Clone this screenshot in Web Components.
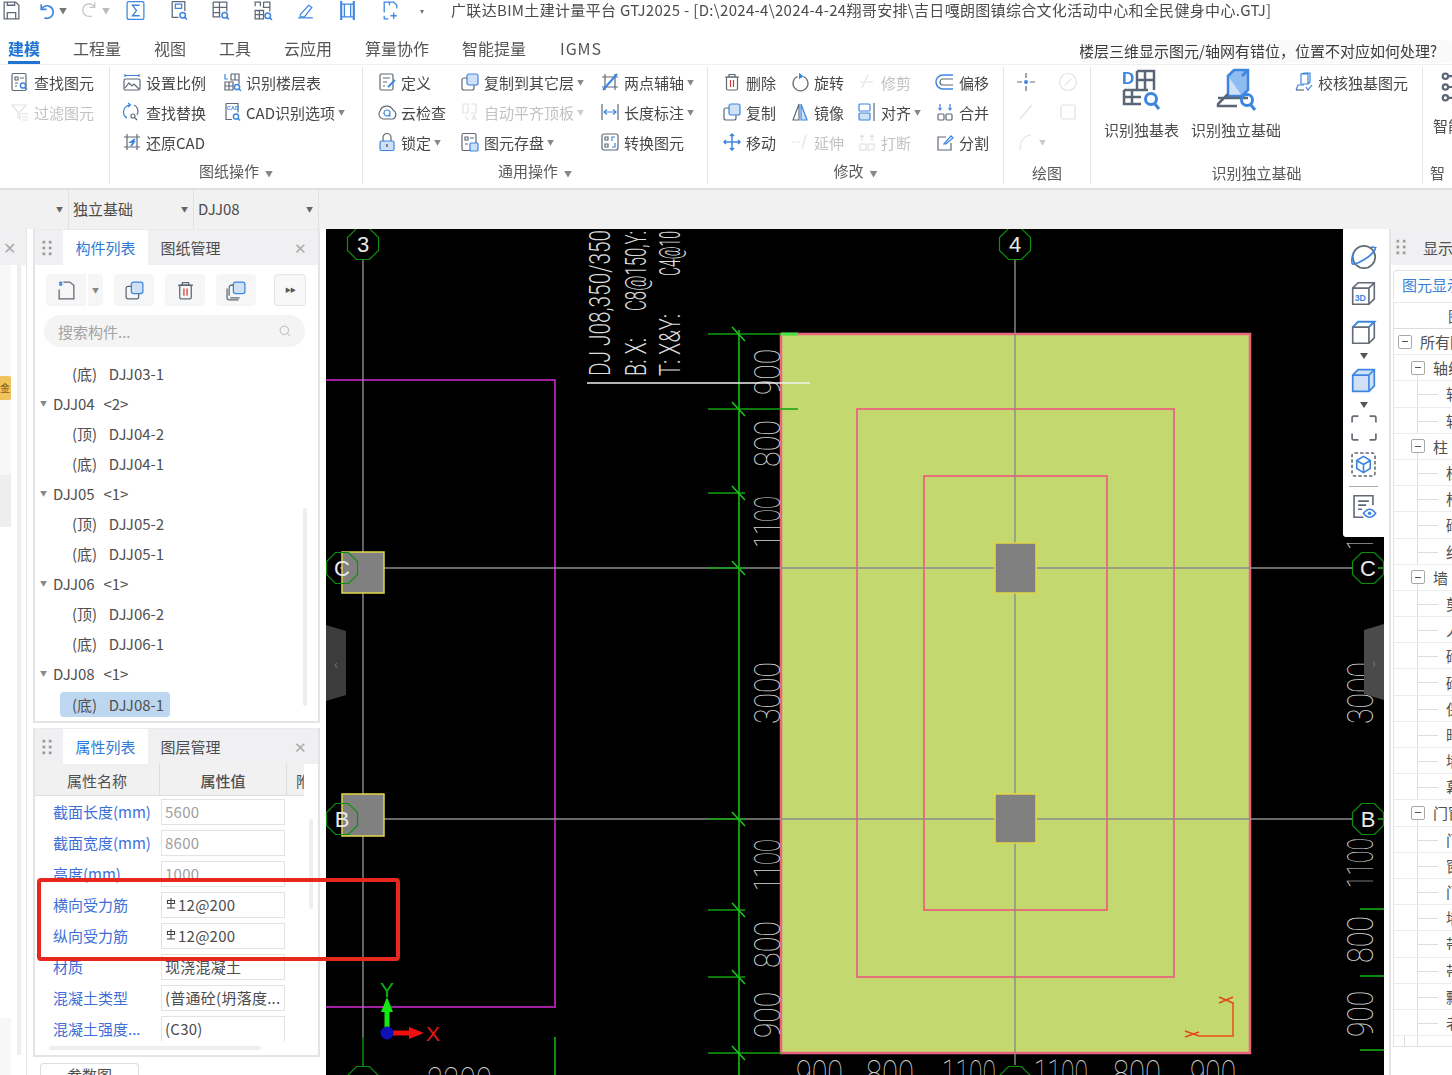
<!doctype html>
<html lang="zh">
<head>
<meta charset="utf-8">
<title>GTJ2025</title>
<style>
  html, body { margin: 0; height: 100%; overflow: hidden; background: #fff; }
  body { font: 15px "Noto Sans CJK SC", "Liberation Sans", sans-serif; color: #4a4a4a; }
</style>
</head>
<body>
<gtj-app>
  <gtj-titlebar></gtj-titlebar>
  <gtj-tabs></gtj-tabs>
  <gtj-ribbon></gtj-ribbon>
  <gtj-combos></gtj-combos>
  <gtj-main>
    <side-strip></side-strip>
    <left-col>
      <gtj-panel tabs="构件列表,图纸管理" h="494">
        <panel-tools></panel-tools>
        <comp-tree></comp-tree>
      </gtj-panel>
      <gtj-panel tabs="属性列表,图层管理" h="329" style="margin-top:5px">
        <prop-table></prop-table>
      </gtj-panel>
      <bottom-tab>参数图</bottom-tab>
    </left-col>
    <cad-canvas></cad-canvas>
    <display-panel></display-panel>
    <red-note></red-note>
  </gtj-main>
</gtj-app>

<script>
const B = "#3d86e0", L = "#cfe0f7", R = "#d8393a";
const Q = (x, y) => `<circle cx="${x}" cy="${y}" r="2.6" stroke="${B}" stroke-width="1.5"/><path d="M${x + 2} ${y + 2}l2 2" stroke="${B}" stroke-width="1.5"/>`;
const COPY = `<rect x="7" y="2" width="11" height="11" rx="2" fill="${L}" stroke="${B}"/><path d="M7 6H4a2 2 0 0 0-2 2v8a2 2 0 0 0 2 2h8a2 2 0 0 0 2-2v-3"/>`;
const TRASH = `<path d="M3 5h14M7 5V2.5h6V5"/><rect x="4.5" y="5" width="11" height="13" rx="1.5"/><path d="M8.5 8v7M11.5 8v7" stroke="${R}"/>`;

const ICONS = {
  save: `<path d="M3 2h11l3 3v13H3zM6 18v-6h8v6M6 2v3h7V2"/>`,
  undo: `<path d="M5 4v5h5M5 9a6 6 0 1 1 3 8" stroke="${B}" stroke-width="1.6"/>`,
  redo: `<path d="M15 4v5h-5M15 9a6 6 0 1 0-3 8"/>`,
  sigma: `<rect x="2" y="1.5" width="16" height="17" rx="1.5" stroke="${B}"/><path d="M14 5H7l4 5-4 5h7" stroke="${B}"/>`,
  qa: `<path d="M4 1.5v15h6M4 1.5h12v9"/><path d="M7 4h6v4H7z" stroke="${B}"/>${Q(14, 14.5)}`,
  qb: `<path d="M3 2h13v9M3 2v14h7M3 7h13M3 12h7M9 2v14"/>${Q(14, 14.5)}`,
  qc: `<path d="M3 6V2h5v4M11 2h6v9M11 2v5h6M3 10h8v8H3zM3 14h8M7 10v8" />${Q(15, 15)}`,
  qd: `<path d="M3 17h14" stroke="${B}"/><path d="M5 14l8-9 3 2-7 9H5z" stroke="${B}"/>`,
  qe: `<path d="M4 1v18M16 1v18" stroke="${B}" stroke-width="2"/><path d="M4 4h12M4 16h12M7 4v12M13 4v12" stroke="${B}"/>`,
  qf: `<path d="M4 12V2h9l3 3v3M4 15v3h4M9 2v3" stroke="${B}"/><path d="M13 12v6M10 15h6" stroke="${B}"/>`,
  find: `<rect x="2" y="1.5" width="14" height="17" rx="1.5"/><path d="M5 5h3v3H5zM10 6h4M5 11h3M5 14h2"/>${Q(13, 13.5)}`,
  filter: `<path d="M2 3h14l-6 7v7l-2-2v-5z"/><path d="M12 12h6M12 15h6M12 18h6"/>`,
  scale: `<path d="M3 2v3M17 2v3M3 3.5h14" stroke="${B}"/><rect x="2" y="7" width="16" height="11" rx="1.5"/><path d="M3 16l4-5 3 3 2-2 5 5"/>`,
  replace: `<path d="M8 3a7 7 0 0 0-3 13M6 1l2.500 2L6 5" stroke="${B}"/><path d="M12 3a7 7 0 0 1 3 10"/><circle cx="11" cy="14" r="2"/><path d="M13 16l2 2"/>`,
  restore: `<path d="M2 5h16M2 15h16M5 2v16M15 2v16"/><path d="M13 7l-4 3h3l-3 4" stroke="${B}" stroke-width="1.8"/>`,
  floor: `<path d="M3 2v5h3" stroke="${B}"/><path d="M9 2h8v10M9 2v6h8M13 2v6M3 10h8v8H3zM3 14h8M7 10v8"/>${Q(15, 15)}`,
  cadopt: `<path d="M4 1.500h12v9M4 1.500v16h6"/><text x="5" y="8" font-size="5.500" font-weight="700" fill="${B}" stroke="none">CAD</text>${Q(14, 14.5)}`,
  define: `<rect x="3" y="2" width="13" height="16" rx="1.500"/><path d="M6 6h7M6 10h4M6 14h2"/><path d="M11 15l7-7" stroke="${B}" stroke-width="1.800"/>`,
  cloud: `<path d="M6 17a5 5 0 0 1-3-8 7 7 0 0 1 13-1 5 5 0 0 1 0 9z"/><circle cx="10" cy="11" r="3" stroke="${B}"/><path d="M12 13l1.500 1.500" stroke="${B}"/>`,
  lock: `<rect x="3" y="9" width="14" height="9.500" rx="1.500" fill="${L}" stroke="${B}"/><path d="M6 9V5.500a4 4 0 0 1 8 0V9"/><path d="M10 12v3" stroke="#445"/>`,
  copy: COPY,
  autoflat: `<path d="M3 2h5v9H3zM11 2h5v9h-5M5 14l3 4M12 18l2-5 2 5M13 16.500h2"/>`,
  disk: `<rect x="2" y="1.500" width="14" height="17" rx="1.500"/><path d="M5 5h3v3H5zM10 6h4M5 12h3"/><rect x="10" y="11" width="8" height="8" rx="1" fill="${L}" stroke="${B}"/>`,
  axis: `<path d="M2 5h16M2 15h16M5 2v16M15 2v16"/><path d="M3 18L17 2" stroke="${B}" stroke-width="2"/>`,
  dim: `<path d="M2 2v16M18 2v16"/><path d="M4 10h12M7 7.500L4 10l3 2.500M13 7.500l3 2.500-3 2.500" stroke="${B}"/>`,
  convert: `<rect x="2" y="2" width="16" height="16" rx="2"/><path d="M5 5h3v3H5zM5 12h3v3H5z"/><path d="M12 9V5h3M15 11v4h-3" stroke="${B}"/>`,
  del: TRASH,
  rotate: `<path d="M13.500 4.500a7.500 7.500 0 1 1-6 0"/><path d="M9 1.500l3.500 3-3.500 2" stroke="${B}" fill="${B}"/>`,
  trim: `<path d="M3 10h4M9.500 10H16M5 16L11 3"/>`,
  offset: `<path d="M18 3H8a7 7 0 0 0 0 14h10" stroke="${B}" stroke-width="1.500"/><path d="M18 7H8a3 3 0 0 0 0 6h10"/>`,
  mirror: `<path d="M9 2L3 18h6z"/><path d="M11 2l6 16h-6z" fill="${L}" stroke="${B}"/>`,
  align: `<rect x="2" y="2" width="11" height="7" rx="1" stroke="${B}"/><rect x="2" y="11" width="11" height="7" rx="1" fill="${L}" stroke="${B}"/><path d="M17 1v18"/>`,
  merge: `<rect x="3" y="12" width="6" height="6" rx="1"/><rect x="11" y="12" width="6" height="6" rx="1"/><path d="M5 2v6M15 2v6" stroke="${B}"/><path d="M3.500 6L5 8l1.500-2M13.500 6L15 8l1.500-2" stroke="${B}"/>`,
  move: `<path d="M10 2v16M2 10h16M8 4l2-2 2 2M8 16l2 2 2-2M4 8l-2 2 2 2M16 8l2 2-2 2" stroke="${B}" stroke-width="1.500"/>`,
  extend: `<path d="M2 10h9" stroke-dasharray="3 2"/><path d="M12 17L16 3"/>`,
  brk: `<rect x="3" y="12" width="6" height="6"/><rect x="11" y="12" width="6" height="6"/><path d="M5 3v6M15 3v6M3 5l2-2 2 2M13 5l2-2 2 2"/>`,
  split: `<path d="M11 5H3v13h13v-7"/><path d="M9 12l7-8 2 2-7 6z" stroke="${B}"/>`,
  point: `<path d="M10 1v5M10 14v5M1 10h5M14 10h5"/><circle cx="10" cy="10" r="2" fill="${B}" stroke="none"/>`,
  gauge: `<circle cx="10" cy="10" r="8.500"/><path d="M7 13l6-6"/>`,
  line: `<path d="M4 17L16 3"/>`,
  rrect: `<rect x="3" y="3" width="14" height="14" rx="2"/>`,
  arc: `<path d="M4 18C4 9 8 4 15 3"/>`,
  check: `<path d="M7 2h7v10H7zM7 2l3-1h6v9l-2 2" stroke="${B}"/><path d="M2 18l2-5h6M12 15l2 3 4-5" stroke="${B}"/><path d="M2 18h8"/>`,
  smart: `<circle cx="3" cy="4" r="1.500"/><circle cx="3" cy="10" r="1.500"/><circle cx="3" cy="16" r="1.500"/><path d="M5 4h13M5 10h13M5 16h13"/>`,
  grip: `<g fill="currentColor" stroke="none"><rect x="5" y="2" width="3" height="3"/><rect x="12" y="2" width="3" height="3"/><rect x="5" y="8.500" width="3" height="3"/><rect x="12" y="8.500" width="3" height="3"/><rect x="5" y="15" width="3" height="3"/><rect x="12" y="15" width="3" height="3"/></g>`,
  newdoc: `<path d="M3 9v9h14V5l-4-3H7"/><path d="M3 2l3 3M6 2L3 5M4.500 1.500v4" stroke="${B}"/>`,
  copies: `<rect x="7" y="2" width="11" height="11" rx="2" fill="${L}" stroke="${B}"/><path d="M7 5H5a2 2 0 0 0-2 2v8M4 17h9M1 8v9a2 2 0 0 0 2 2h9"/>`,
  search: `<circle cx="9" cy="9" r="6"/><path d="M13.500 13.500L17 17"/>`,
  orbit: `<circle cx="10" cy="10" r="8"/><path d="M1.500 14C1 16 5 15 10 12s8.500-7 8-8.500" stroke="${B}" stroke-width="1.300"/><path d="M2.500 7c-1 2.500-1.500 5-1 7M15 3c2 0 3.500 0 3.500 .5" stroke="${B}"/>`,
  cube3d: `<path d="M2 6h12v12H2zM2 6l4-4h12v12l-4 4M14 6l4-4"/><text x="3.500" y="15.500" font-size="6.500" font-weight="700" fill="${B}" stroke="none">3D</text>`,
  cube: `<path d="M2 6h12v12H2zM14 18l4-4V2"/><path d="M2 6l4-4h12l-4 4" stroke="${B}" stroke-width="1.500"/>`,
  cubef: `<path d="M2 6l4-4h12v12l-4 4H2z" fill="${L}" stroke="${B}" stroke-width="1.300"/><path d="M2 6h12v12M14 6l4-4" stroke="${B}"/>`,
  frame: `<path d="M1.500 6V2.500a1 1 0 0 1 1-1H6M14 1.500h3.500a1 1 0 0 1 1 1V6M18.500 14v3.500a1 1 0 0 1-1 1H14M6 18.500H2.500a1 1 0 0 1-1-1V14"/>`,
  dashed: `<rect x="1.500" y="1.500" width="17" height="17" rx="2" stroke-dasharray="2.500 1.500"/><path d="M10 4l5 3v6l-5 3-5-3V7zM5 7l5 3 5-3M10 10v6" stroke="${B}"/>`,
  listeye: `<path d="M17 9V2H3v16h7"/><path d="M6 6h8M6 9h6M6 12h3"/><path d="M10 15c3-4 6-4 9 0-3 4-6 4-9 0z" stroke="${B}"/><circle cx="14.500" cy="15" r="1.300" fill="${B}" stroke="none"/>`,
};

class GtjIcon extends HTMLElement {
  connectedCallback() {
    const s = this.getAttribute("size") || 20;
    this.attachShadow({ mode: "open" }).innerHTML = `
      <style>
        :host { display: inline-flex; width: ${s}px; height: ${s}px; flex: none; color: var(--ic, #5f6975); }
        svg { width: 100%; height: 100%; font-family: "Liberation Sans", sans-serif; }
      </style>
      <svg viewBox="0 0 20 20" fill="none" stroke="currentColor" stroke-width="1.200">${ICONS[this.getAttribute("name")] || ""}</svg>`;
  }
}

class GtjApp extends HTMLElement {
  constructor() {
    super();
    this.attachShadow({ mode: "open" }).innerHTML = `
      <style>
        :host { display: flex; flex-direction: column; width: 1452px; height: 1075px; overflow: hidden; filter: blur(.35px); }
      </style>
      <slot></slot>`;
  }
}

class GtjTitlebar extends HTMLElement {
  constructor() {
    super();
    const q = (n, m) => `<gtj-icon name="${n}" size="21" style="margin-left:${m}px"></gtj-icon>`;
    this.attachShadow({ mode: "open" }).innerHTML = `
      <style>
        :host { display: flex; align-items: flex-start; height: 38px; padding: 0 0 0 1px; box-sizing: border-box; font-size: 15px; color: #4c4c4c; white-space: nowrap; }
        .row { display: flex; align-items: center; height: 21px; }
        .car { font-size: 8px; color: #777; margin-left: 2px; }
        .car.off { color: #bbb; }
        .off-ic { --ic: #c4c4c4; }
        .title { margin-left: 27px; line-height: 21px; margin-top: -1px; letter-spacing: .32px; }
      </style>
      <div class="row">
        ${q("save", 0)}
        ${q("undo", 14)}<span class="car">▼</span>
        <span class="off-ic">${q("redo", 12)}</span><span class="car off">▼</span>
        ${q("sigma", 15)}${q("qa", 22)}${q("qb", 21)}${q("qc", 21)}${q("qd", 22)}${q("qe", 21)}${q("qf", 22)}
        <span class="car" style="margin-left:19px">▾</span>
      </div>
      <div class="title">广联达BIM土建计量平台 GTJ2025 - [D:\\2024-4\\2024-4-24翔哥安排\\吉日嘎朗图镇综合文化活动中心和全民健身中心.GTJ]</div>`;
  }
}

class GtjTabs extends HTMLElement {
  constructor() {
    super();
    const tabs = ["建模", "工程量", "视图", "工具", "云应用", "算量协作", "智能提量", "IGMS"];
    this.attachShadow({ mode: "open" }).innerHTML = `
      <style>
        :host { display: flex; align-items: flex-start; height: 27px; padding-left: 8px; font-size: 16px; color: #555; white-space: nowrap; border-bottom: 1px solid #f0f0f0; box-sizing: border-box; }
        span { margin: -1px 33px 0 0; line-height: 22px; }
        span:nth-child(9) { letter-spacing: .9px; margin-left: 1px; }
        .on { color: #1f73d2; font-weight: 700; box-shadow: 0 -3px 0 0 #1f73d2 inset; height: 27px; }
        .ask { margin: 2px 0 0 auto; width: 372px; flex: none; height: 23px; background: #fafafa; border-radius: 3px; display: flex; justify-content: flex-end; padding-right: 15px; box-sizing: border-box; font-size: 15px; color: #3c3c3c; overflow: hidden; line-height: 22px; }
      </style>
      ${tabs.map((t, i) => `<span class="${i ? "" : "on"}">${t}</span>`).join("")}
      <div class="ask">楼层三维显示图元/轴网有错位，位置不对应如何处理?</div>`;
  }
}

class RbItem extends HTMLElement {
  constructor() {
    super();
    const off = this.hasAttribute("off");
    const car = this.hasAttribute("car");
    this.attachShadow({ mode: "open" }).innerHTML = `
      <style>
        :host { display: flex; align-items: center; height: 30px; gap: 4px; white-space: nowrap; font-size: 15px; color: ${off ? "#c2c2c2" : "#474747"}; --ic: ${off ? "#cfcfcf" : "#5f6975"}; }
        .car { font-size: 7px; color: ${off ? "#ccc" : "#888"}; margin-left: -1px; }
        gtj-icon { ${off ? "filter: grayscale(1) opacity(.6);" : ""} }
      </style>
      <gtj-icon name="${this.getAttribute("icon")}"></gtj-icon><slot></slot>${car ? `<span class="car">▼</span>` : ""}`;
  }
}

class RbBig extends HTMLElement {
  constructor() {
    super();
    this.attachShadow({ mode: "open" }).innerHTML = `
      <style>
        :host { display: flex; flex-direction: column; align-items: center; justify-self: start; white-space: nowrap; font-size: 15px; color: #4c4c4c; --ic: #5a6676; }
        svg { width: 44px; height: 44px; margin-top: 1px; font-family: "Liberation Sans", sans-serif; }
        .t { margin-top: 7px; line-height: 22px; }
      </style>
      <svg viewBox="0 0 44 44" fill="none" stroke="#5a6676" stroke-width="2.500">${this.getAttribute("kind") === "a"
        ? `<text x="2" y="16" font-size="17" font-weight="700" fill="${B}" stroke="none">D</text>
           <path d="M17 3h17v19M17 3v19M17 12h17M25 3v19M4 22h24M4 22v14h17M4 29h17M12 22v14"/>
           <circle cx="31" cy="31" r="5.500" stroke="${B}" stroke-width="3"/><path d="M35 36l4 5" stroke="${B}" stroke-width="3"/>`
        : `<path d="M14 8h14v20H14z" fill="${L}" stroke="${B}"/><path d="M14 8l6-6h14v20l-6 6M28 8l6-6" stroke="${B}" fill="#8fbcf0"/>
           <path d="M14 26L4 36v2h19M4 30h30" stroke-width="2.500"/>
           <circle cx="33" cy="32" r="5.500" stroke="${B}" stroke-width="3"/><path d="M37 37l4 5" stroke="${B}" stroke-width="3"/>`}</svg>
      <div class="t"><slot></slot></div>`;
  }
}

class RbGroup extends HTMLElement {
  connectedCallback() {
    if (this.shadowRoot) return;
    const a = n => this.getAttribute(n);
    this.attachShadow({ mode: "open" }).innerHTML = `
      <style>
        :host { display: flex; flex-direction: column; width: ${a("w")}px; flex: none; box-sizing: border-box; margin-top: 2px; height: 117px; border-right: 1px solid #e6e6e6; }
        :host(:last-child) { border-right: 0; }
        .body { flex: 1; display: grid; grid-template-columns: ${a("cols")}; grid-auto-rows: 30px; padding-left: ${a("pad")}px; overflow: hidden; }
        .lab { height: 24px; line-height: ${this.hasAttribute("low") ? 26 : 22}px; text-align: center; font-size: 15px; color: #5a5a5a; white-space: nowrap; }
        .car { font-size: 8px; color: #888; margin-left: 6px; }
      </style>
      <div class="body"><slot></slot></div>
      <div class="lab">${a("label")}${this.hasAttribute("car") ? `<span class="car">▼</span>` : ""}</div>`;
  }
}

class GtjRibbon extends HTMLElement {
  constructor() {
    super();
    const it = (icon, txt, attr = "") => `<rb-item icon="${icon}" ${attr}>${txt}</rb-item>`;
    this.attachShadow({ mode: "open" }).innerHTML = `
      <style>
        :host { display: flex; height: 125px; box-sizing: border-box; border-bottom: 2px solid #e0e0e0; overflow: hidden; }
        rb-big { grid-row: 1 / span 3; }
      </style>
      <rb-group label="" w="110" pad="10" cols="100px">
        ${it("find", "查找图元")}${it("filter", "过滤图元", "off")}
      </rb-group>
      <rb-group label="图纸操作" car w="253" pad="12" cols="100px 140px">
        ${it("scale", "设置比例")}${it("floor", "识别楼层表")}
        ${it("replace", "查找替换")}${it("cadopt", "CAD识别选项", "car")}
        ${it("restore", "还原CAD")}
      </rb-group>
      <rb-group label="通用操作" car w="345" pad="14" cols="83px 140px 100px">
        ${it("define", "定义")}${it("copy", "复制到其它层", "car")}${it("axis", "两点辅轴", "car")}
        ${it("cloud", "云检查")}${it("autoflat", "自动平齐顶板", "off car")}${it("dim", "长度标注", "car")}
        ${it("lock", "锁定", "car")}${it("disk", "图元存盘", "car")}${it("convert", "转换图元")}
      </rb-group>
      <rb-group label="修改" car w="296" pad="14" cols="68px 67px 78px 70px">
        ${it("del", "删除")}${it("rotate", "旋转")}${it("trim", "修剪", "off")}${it("offset", "偏移")}
        ${it("copy", "复制")}${it("mirror", "镜像")}${it("align", "对齐", "car")}${it("merge", "合并")}
        ${it("move", "移动")}${it("extend", "延伸", "off")}${it("brk", "打断", "off")}${it("split", "分割")}
      </rb-group>
      <rb-group label="绘图" low w="87" pad="12" cols="42px 30px">
        ${it("point", "")}${it("gauge", "", "off")}
        ${it("line", "", "off")}${it("rrect", "", "off")}
        ${it("arc", "", "off car")}
      </rb-group>
      <rb-group label="识别独立基础" low w="332" pad="13" cols="87px 103px 130px">
        <rb-big kind="a">识别独基表</rb-big>
        <rb-big kind="b">识别独立基础</rb-big>
        ${it("check", "校核独基图元")}
      </rb-group>
      <rb-group label="智" low w="29" pad="10" cols="60px">
        <rb-big-smart></rb-big-smart>
      </rb-group>`;
  }
}

class RbBigSmart extends HTMLElement {
  constructor() {
    super();
    this.attachShadow({ mode: "open" }).innerHTML = `
      <style>
        :host { display: flex; flex-direction: column; grid-row: 1 / span 3; white-space: nowrap; font-size: 15px; color: #4c4c4c; --ic: #5a6676; }
        .t { margin-top: 10px; line-height: 22px; }
      </style>
      <gtj-icon name="smart" size="36" style="margin:2px 0 0 7px"></gtj-icon><div class="t">智能</div>`;
  }
}

class GtjCombos extends HTMLElement {
  constructor() {
    super();
    const c = (w, t) => `<div class="c" style="width:${w}px"><span>${t}</span><i>▼</i></div>`;
    this.attachShadow({ mode: "open" }).innerHTML = `
      <style>
        :host { display: flex; height: 39px; background: #f1f1f1; font-size: 15px; color: #4c4c4c; }
        .c { display: flex; align-items: center; justify-content: space-between; box-sizing: border-box; padding: 0 5px 2px 4px; border-right: 1px solid #e2e2e2; height: 39px; }
        i { font-style: normal; font-size: 7px; color: #666; }
      </style>
      ${c(69, "")}${c(125, "独立基础")}${c(125, "DJJ08")}`;
  }
}

class GtjMain extends HTMLElement {
  constructor() {
    super();
    this.attachShadow({ mode: "open" }).innerHTML = `
      <style>
        :host { display: flex; position: relative; flex: 1; min-height: 0; overflow: hidden; background: #fff; }
      </style>
      <slot></slot>`;
  }
}

class SideStrip extends HTMLElement {
  constructor() {
    super();
    this.attachShadow({ mode: "open" }).innerHTML = `
      <style>
        :host { display: flex; flex-direction: column; width: 27px; flex: none; border-right: 1px solid #e6e6e6; box-sizing: border-box; }
        .head { height: 36px; background: #f0f0f2; color: #aaa; font-size: 16px; padding-left: 3px; line-height: 36px; }
        .body { flex: 1; display: flex; }
        .rail { width: 11px; display: flex; flex-direction: column; background: #f6f7f9; }
        .badge { margin-top: 111px; height: 24px; background: #f0c35c; border-radius: 0 2px 2px 0; color: #806020; font-size: 10px; line-height: 24px; overflow: hidden; }
        .dark { margin-top: 75px; height: 52px; background: #eeeef0; }
        .gap { flex: 1; }
        .bar { width: 4px; margin: 0 0 20px 6px; background: #eee; }
      </style>
      <div class="head">✕</div>
      <div class="body">
        <div class="rail"><div class="badge">金</div><div class="dark"></div><div class="gap" style="background:#fff"></div><div style="height:57px"></div></div>
        <div class="bar"></div>
      </div>`;
  }
}

class LeftCol extends HTMLElement {
  constructor() {
    super();
    this.attachShadow({ mode: "open" }).innerHTML = `
      <style>
        :host { display: flex; flex-direction: column; width: 287px; flex: none; margin: 0 6px; }
      </style>
      <slot></slot>`;
  }
}

class GtjPanel extends HTMLElement {
  connectedCallback() {
    if (this.shadowRoot) return;
    const [a, b] = this.getAttribute("tabs").split(",");
    this.attachShadow({ mode: "open" }).innerHTML = `
      <style>
        :host { display: flex; flex-direction: column; height: ${this.getAttribute("h")}px; box-sizing: border-box; border: 2px solid #e4e4e6; border-top: 1px solid #eaeaea; flex: none; overflow: hidden; }
        .hd { display: flex; height: 35px; flex: none; background: #f0f0f2; font-size: 15px; color: #4c4c4c; white-space: nowrap; --ic: #9b9b9b; }
        .grip { width: 28px; display: flex; align-items: center; justify-content: center; margin-left: -2px; padding-right: 2px; }
        .t { width: 85px; text-align: center; line-height: 35px; }
        .on { background: #fff; color: #2f7ad6; }
        .x { margin-left: auto; width: 36px; text-align: center; line-height: 35px; color: #aaa; font-size: 15px; }
      </style>
      <div class="hd">
        <div class="grip"><gtj-icon name="grip" size="18"></gtj-icon></div>
        <div class="t on">${a}</div><div class="t">${b}</div><div class="x">✕</div>
      </div>
      <slot></slot>`;
  }
}

class PanelTools extends HTMLElement {
  constructor() {
    super();
    const btn = (n) => `<div class="b"><gtj-icon name="${n}" size="21"></gtj-icon></div>`;
    this.attachShadow({ mode: "open" }).innerHTML = `
      <style>
        :host { display: block; flex: none; padding: 9px 11px 0 11px; }
        .row { display: flex; height: 32px; gap: 11px; }
        .b { width: 40px; background: #f6f6f6; border-radius: 4px; display: flex; align-items: center; justify-content: center; }
        .drop { display: flex; gap: 2px; }
        .car { width: 15px; background: #f6f6f6; border-radius: 0 4px 4px 0; font-size: 7px; line-height: 32px; text-align: center; color: #888; }
        .drop .b { border-radius: 4px 0 0 4px; }
        .fw { width: 32px; margin-left: 7px; border: 1px solid #e4e4e4; box-sizing: border-box; background: #f8f8f8; border-radius: 4px; font-size: 6px; letter-spacing: -1px; line-height: 30px; text-align: center; color: #555; }
        .s { margin: 9px 2px 0 -2px; height: 32px; border-radius: 16px; background: #f4f4f5; display: flex; align-items: center; justify-content: space-between; padding: 0 13px 0 14px; color: #a3a3a3; font-size: 15px; --ic: #a9a9a9; }
      </style>
      <div class="row">
        <div class="drop">${btn("newdoc")}<div class="car">▼</div></div>
        ${btn("copy")}${btn("del")}${btn("copies")}
        <div class="fw">▶▶</div>
      </div>
      <div class="s"><span>搜索构件...</span><gtj-icon name="search" size="14"></gtj-icon></div>`;
  }
}

class CompTree extends HTMLElement {
  constructor() {
    super();
    const rows = [
      [2, "(底)  DJJ03-1"], [1, "DJJ04  <2>"], [2, "(顶)  DJJ04-2"], [2, "(底)  DJJ04-1"],
      [1, "DJJ05  <1>"], [2, "(顶)  DJJ05-2"], [2, "(底)  DJJ05-1"],
      [1, "DJJ06  <1>"], [2, "(顶)  DJJ06-2"], [2, "(底)  DJJ06-1"],
      [1, "DJJ08  <1>"], [3, "(底)  DJJ08-1"],
    ];
    this.attachShadow({ mode: "open" }).innerHTML = `
      <style>
        :host { display: flex; flex: 1; margin-top: 11px; min-height: 0; font-size: 15px; color: #505050; }
        .list { flex: 1; }
        .r { height: 30px; display: flex; align-items: center; white-space: pre; }
        .p { padding-left: 5px; word-spacing: 1px; }
        .p i { font-style: normal; font-size: 7px; color: #888; width: 13px; }
        .c { padding-left: 37px; word-spacing: 2.500px; }
        .sel { margin-left: 25px; padding-left: 12px; width: 98px; height: 25px; margin-top: 4px; background: #bdd7f0; border-radius: 4px; word-spacing: 2.500px; }
        .sb { width: 4px; height: 198px; margin: 150px 11px 0 0; background: #eeeeee; border-radius: 2px; }
      </style>
      <div class="list">
        ${rows.map(([k, t]) => k === 1
          ? `<div class="r p"><i>▼</i>${t.replace("<", "&lt;").replace(">", "&gt;")}</div>`
          : `<div class="r ${k === 3 ? "sel" : "c"}">${t}</div>`).join("")}
      </div>
      <div class="sb"></div>`;
  }
}

class PropTable extends HTMLElement {
  constructor() {
    super();
    const bar = `<svg viewBox="0 0 12 12" width="12" height="12" fill="none" stroke="#444" stroke-width="1.100" style="margin:-4px 1px 0 0"><path d="M6 1v10M2 11h8"/><path d="M2.500 3.500h7v3h-7z"/></svg>`;
    const rows = [
      ["截面长度(mm)", "5600", 1], ["截面宽度(mm)", "8600", 1], ["高度(mm)", "1000", 1],
      ["横向受力筋", bar + "12@200"], ["纵向受力筋", bar + "12@200"], ["材质", "现浇混凝土"],
      ["混凝土类型", "(普通砼(坍落度..."], ["混凝土强度...", "(C30)"],
    ];
    this.attachShadow({ mode: "open" }).innerHTML = `
      <style>
        :host { display: flex; flex-wrap: wrap; flex: 1; min-height: 0; font-size: 15px; align-content: flex-start; }
        .tb { width: 269px; height: 277px; overflow: hidden; }
        .hd { display: flex; height: 32px; background: #f1f1f1; border-bottom: 1px solid #ddd; box-sizing: border-box; color: #505050; line-height: 33px; text-align: center; }
        .hd div { border-right: 1px solid #dcdcdc; box-sizing: border-box; overflow: hidden; }
        .n { width: 125px; }
        .v { width: 127px; font-weight: 500; }
        .m { width: 17px; border: 0 !important; text-align: left; white-space: nowrap; padding-left: 9px; }
        .r { display: flex; height: 31px; align-items: center; }
        .l { width: 125px; padding-left: 18px; box-sizing: border-box; color: #3e6fd8; white-space: nowrap; overflow: hidden; }
        .i { margin-left: 1px; width: 124px; height: 26px; box-sizing: border-box; border: 1px solid #e3e3e3; padding-left: 3px; display: flex; align-items: center; color: #4c4c4c; white-space: nowrap; overflow: hidden; letter-spacing: .25px; }
        .ro { color: #a0a0a0; }
        .sb { width: 4px; height: 90px; margin: 55px 0 0 5px; background: #efefef; border-radius: 2px; }
        .hs { width: 212px; height: 4px; margin: 5px 0 0 14px; background: #eeeeee; border-radius: 2px; }
      </style>
      <div class="tb">
        <div class="hd"><div class="n">属性名称</div><div class="v">属性值</div><div class="m">附</div></div>
        ${rows.map(([l, v, ro]) => `<div class="r"><div class="l">${l}</div><div class="i ${ro ? "ro" : ""}">${v}</div></div>`).join("")}
      </div>
      <div class="sb"></div>
      <div class="hs"></div>`;
  }
}

class BottomTab extends HTMLElement {
  constructor() {
    super();
    this.attachShadow({ mode: "open" }).innerHTML = `
      <style>
        :host { display: block; width: 99px; height: 24px; margin: 6px 0 0 7px; box-sizing: border-box; border: 1px solid #ddd; border-bottom: 0; border-radius: 4px 4px 0 0; text-align: center; font-size: 15px; line-height: 22px; color: #505050; }
      </style>
      <slot></slot>`;
  }
}

class RedNote extends HTMLElement {
  constructor() {
    super();
    this.attachShadow({ mode: "open" }).innerHTML = `
      <style>
        :host { position: absolute; left: 37px; top: 649px; width: 363px; height: 83px; box-sizing: border-box; border: 4px solid #e8281e; border-radius: 4px; }
      </style>`;
  }
}

class CadCanvas extends HTMLElement {
  constructor() {
    super();
    const oct = (x, y, t) => {
      const r = 15.500, k = 6.400;
      const pts = [[-k, -r], [k, -r], [r, -k], [r, k], [k, r], [-k, r], [-r, k], [-r, -k]].map(p => `${x + p[0]},${y + p[1]}`).join(" ");
      return `<polygon points="${pts}" fill="none" stroke="#0d8f0d" stroke-width="1.200"/><text x="${x}" y="${y + 8}" text-anchor="middle" font-size="22" font-family="Liberation Sans" fill="#e8e8e8">${t}</text>`;
    };
    const vdim = (t, x, y, len) => `<text transform="translate(${x},${y}) rotate(-90)" textLength="${len}" lengthAdjust="spacingAndGlyphs" font-size="36" class="d">${t}</text>`;
    const hdim = (t, x, y, len) => `<text x="${x}" y="${y}" textLength="${len}" lengthAdjust="spacingAndGlyphs" font-size="36" class="d">${t}</text>`;
    const note = (t, x, y, len) => `<text transform="translate(${x},${y}) rotate(-90)" textLength="${len}" lengthAdjust="spacingAndGlyphs" font-size="29" class="n">${t}</text>`;
    const slash = y => `<path d="M732 ${y - 7}l13 14" stroke="#22c422" stroke-width="1.500"/>`;
    const tick = (y, x2) => `<path d="M708 ${y}H${x2}" stroke="#0fa00f" stroke-width="1.500"/>${slash(y)}`;
    this.attachShadow({ mode: "open" }).innerHTML = `
      <style>
        :host { display: block; position: relative; width: 1058px; height: 846px; flex: none; background: #000; overflow: hidden; }
        svg.cad { display: block; width: 1058px; height: 846px; }
        .d { fill: #d4d4d4; font-family: Roboto, "Liberation Sans", sans-serif; font-weight: 100; }
        .n { fill: #dcdcdc; font-family: Roboto, "Liberation Mono", monospace; font-weight: 300; }
        .tools { position: absolute; right: 0; top: 0; width: 41px; height: 308px; background: #fff; border-radius: 0 0 0 3px; display: flex; flex-direction: column; align-items: center; --ic: #626b76; }
        .car { width: 0; height: 0; border: 4px solid transparent; border-top: 6px solid #555; border-bottom: 0; }
        .sep { width: 29px; height: 1px; background: #aaa; }
        .hl { position: absolute; width: 20px; height: 76px; background: #3c3c3c; color: #777; font-size: 13px; display: flex; align-items: center; justify-content: center; }
        .hl.a { left: 0; top: 396px; clip-path: polygon(0 0, 100% 8%, 100% 92%, 0 100%); }
        .hl.b { right: 0; top: 395px; background: #4a4a4a; clip-path: polygon(0 8%, 100% 0, 100% 100%, 0 92%); }
      </style>
      <svg class="cad" viewBox="326 229 1058 846" xmlns="http://www.w3.org/2000/svg">
        <path d="M326 380H555V1007H326" fill="none" stroke="#a21fa2" stroke-width="2"/>
        <path d="M555 1037V1075" stroke="#0d8f0d" stroke-width="2"/>

        <rect x="781" y="334" width="469" height="719" fill="#c3d96f" stroke="#e9657f" stroke-width="2.500"/>
        <path d="M781 334H798" stroke="#3ce83c" stroke-width="3"/>
        <rect x="857" y="409" width="317" height="568" fill="none" stroke="#e9657f" stroke-width="1.800"/>
        <rect x="924" y="476" width="183" height="434" fill="none" stroke="#e9657f" stroke-width="1.800"/>

        <path d="M363 259V1037M1015 259V1065M340 568H1352M340 819H1352" stroke="#8c8c8c" stroke-width="1.400"/>
        <path d="M363 1037V1066" stroke="#0d8f0d" stroke-width="1.500"/>
        <path d="M1378 568H1384M1378 819H1384" stroke="#18b818" stroke-width="1.500"/>

        <g fill="#808080" stroke="#e2d84a" stroke-width="1.500">
          <rect x="342" y="552" width="42" height="41"/>
          <rect x="342" y="794" width="42" height="42"/>
          <rect x="995" y="543" width="41" height="50"/>
          <rect x="995" y="794" width="41" height="49"/>
        </g>

        ${oct(363, 244, "3")}${oct(1015, 244, "4")}${oct(342, 568, "C")}${oct(342, 819, "B")}
        ${oct(1368, 568, "C")}${oct(1368, 819, "B")}${oct(363, 1082, "3")}${oct(1015, 1082, "4")}

        <path d="M739 330V1075" stroke="#0c9a0c" stroke-width="2"/>
        ${tick(334, 781)}${tick(409, 798)}${tick(493, 745)}${tick(568, 745)}${tick(819, 745)}${tick(910, 745)}${tick(977, 745)}${tick(1053, 781)}
        <path d="M1360 909H1384M1360 976H1384M1360 1050H1384" stroke="#18b818" stroke-width="1.500"/>

        ${vdim("900", 780, 395, 46)}${vdim("800", 780, 467, 47)}${vdim("1100", 780, 548, 52)}${vdim("3000", 780, 724, 62)}
        ${vdim("1100", 780, 891, 52)}${vdim("800", 780, 968, 47)}${vdim("900", 780, 1038, 46)}
        ${vdim("3000", 1373, 724, 62)}${vdim("1100", 1373, 888, 50)}${vdim("800", 1373, 963, 47)}${vdim("900", 1373, 1037, 46)}
        ${vdim("1", 1373, 550, 12)}
        ${hdim("900", 796, 1086, 47)}${hdim("800", 866, 1086, 48)}${hdim("1100", 942, 1086, 54)}
        ${hdim("1100", 1034, 1086, 54)}${hdim("800", 1113, 1086, 48)}${hdim("900", 1190, 1086, 46)}
        ${hdim("2200", 427, 1093, 65)}

        ${note("DJ J08,350/350", 610, 376, 146)}
        ${note("B: X:", 646, 376, 38)}
        ${note("C8@150,Y:", 646, 311, 80)}
        ${note("T: X&amp;Y:", 680, 376, 62)}
        ${note("C4@10", 680, 276, 45)}
        <path d="M587 383H810" stroke="#f0f0f0" stroke-width="1.500"/>

        <path d="M1233 1002V1036H1199" fill="none" stroke="#e2702a" stroke-width="2"/>
        <path d="M1219 997l14 6M1219 1003l14-6M1185 1031l14 5M1185 1037l14-5" stroke="#e04a1a" stroke-width="1.500"/>

        <path d="M387 1030V1010" stroke="#12e812" stroke-width="5"/><path d="M387 997l-6 15h12z" fill="#12e812"/>
        <path d="M390 1033H410" stroke="#f01010" stroke-width="5"/><path d="M424 1033l-15-6v12z" fill="#f01010"/>
        <circle cx="387" cy="1033" r="6.500" fill="#1010b8"/>
        <text x="387" y="997" text-anchor="middle" font-size="21" font-family="Liberation Sans" fill="#12b012">Y</text>
        <text x="426" y="1041" font-size="21" font-family="Liberation Sans" fill="#e01818">X</text>
      </svg>
      <div class="hl a">‹</div>
      <div class="hl b">›</div>
      <div class="tools">
        <gtj-icon name="orbit" size="28" style="margin-top:14px"></gtj-icon>
        <gtj-icon name="cube3d" size="27" style="margin-top:9px"></gtj-icon>
        <gtj-icon name="cube" size="27" style="margin-top:12px"></gtj-icon>
        <div class="car" style="margin-top:7px"></div>
        <gtj-icon name="cubef" size="27" style="margin-top:8px"></gtj-icon>
        <div class="car" style="margin-top:8px"></div>
        <gtj-icon name="frame" size="28" style="margin-top:6px"></gtj-icon>
        <gtj-icon name="dashed" size="27" style="margin-top:9px"></gtj-icon>
        <div class="sep" style="margin-top:8px"></div>
        <gtj-icon name="listeye" size="27" style="margin-top:6px"></gtj-icon>
      </div>`;
  }
}

class DisplayPanel extends HTMLElement {
  constructor() {
    super();
    const tree = [
      [0, "所有图元"], [1, "轴线"], [2, "轴网"], [2, "辅轴"],
      [1, "柱"], [2, "柱"], [2, "构造柱"], [2, "砌体柱"], [2, "约束边缘"],
      [1, "墙"], [2, "剪力墙"], [2, "人防门框墙"], [2, "砌体墙"], [2, "砌体加筋"], [2, "保温墙"], [2, "暗梁"], [2, "墙垛"], [2, "幕墙"],
      [1, "门窗洞"], [2, "门"], [2, "窗"], [2, "门联窗"], [2, "墙洞"], [2, "带形窗"], [2, "带形洞"], [2, "飘窗"], [2, "老虎窗"],
    ];
    const box = `<span class="box"></span>`;
    this.attachShadow({ mode: "open" }).innerHTML = `
      <style>
        :host { display: flex; flex-direction: column; flex: 1; min-width: 0; margin-left: 5px; border-left: 2px solid #e4e4e6; overflow: hidden; font-size: 15px; color: #505050; white-space: nowrap; }
        .hd { height: 36px; flex: none; background: #f0f0f2; display: flex; align-items: center; padding-left: 1px; --ic: #9b9b9b; gap: 11px; }
        .tab { margin: 5px 0 0 2px; width: 90px; height: 29px; flex: none; box-sizing: border-box; border: 1px solid #e4e4e4; border-bottom: 0; border-radius: 4px 4px 0 0; padding-left: 8px; line-height: 27px; color: #3a7fd6; }
        .tb { margin: 3px 0 0 2px; width: 90px; border-left: 1px solid #e2e2e2; border-top: 1px solid #e8e8e8; border-bottom: 1px solid #e2e2e2; }
        .th { height: 25px; line-height: 25px; padding-left: 54px; border-bottom: 1px solid #dcdcdc; }
        .r { height: 26.200px; display: flex; align-items: center; box-sizing: border-box; border-bottom: 1px solid #ececec; }
        .l0 { padding-left: 4px; }
        .l1 { padding-left: 17px; background: linear-gradient(#ddd, #ddd) 23px 19px / 1px 8px no-repeat; }
        .l2 { padding-left: 52px; background: linear-gradient(#ddd, #ddd) 23px 0 / 1px 100% no-repeat, linear-gradient(#ddd, #ddd) 24px 13px / 20px 1px no-repeat; }
        .end { height: 10px; background: linear-gradient(#ddd, #ddd) 10px 0 / 1px 100% no-repeat, linear-gradient(#ddd, #ddd) 23px 0 / 1px 100% no-repeat; }
        .box { width: 14px; height: 14px; flex: none; margin-right: 8px; border: 1px solid #a8a8a8; border-radius: 2px; box-sizing: border-box; display: flex; align-items: center; justify-content: center; }
        .box::after { content: ""; width: 6px; height: 1px; background: #555; }
      </style>
      <div class="hd"><gtj-icon name="grip" size="18"></gtj-icon><span style="margin-left:2px">显示设置</span></div>
      <div class="tab">图元显示</div>
      <div class="tb">
        <div class="th">图元</div>
        ${tree.map(([l, t]) => `<div class="r l${l}">${l < 2 ? box : ""}${t}</div>`).join("")}
        <div class="end"></div>
      </div>`;
  }
}

customElements.define("gtj-icon", GtjIcon);
customElements.define("gtj-app", GtjApp);
customElements.define("gtj-titlebar", GtjTitlebar);
customElements.define("gtj-tabs", GtjTabs);
customElements.define("rb-item", RbItem);
customElements.define("rb-big", RbBig);
customElements.define("rb-big-smart", RbBigSmart);
customElements.define("rb-group", RbGroup);
customElements.define("gtj-ribbon", GtjRibbon);
customElements.define("gtj-combos", GtjCombos);
customElements.define("gtj-main", GtjMain);
customElements.define("side-strip", SideStrip);
customElements.define("left-col", LeftCol);
customElements.define("gtj-panel", GtjPanel);
customElements.define("panel-tools", PanelTools);
customElements.define("comp-tree", CompTree);
customElements.define("prop-table", PropTable);
customElements.define("bottom-tab", BottomTab);
customElements.define("red-note", RedNote);
customElements.define("cad-canvas", CadCanvas);
customElements.define("display-panel", DisplayPanel);
</script>
</body>
</html>
